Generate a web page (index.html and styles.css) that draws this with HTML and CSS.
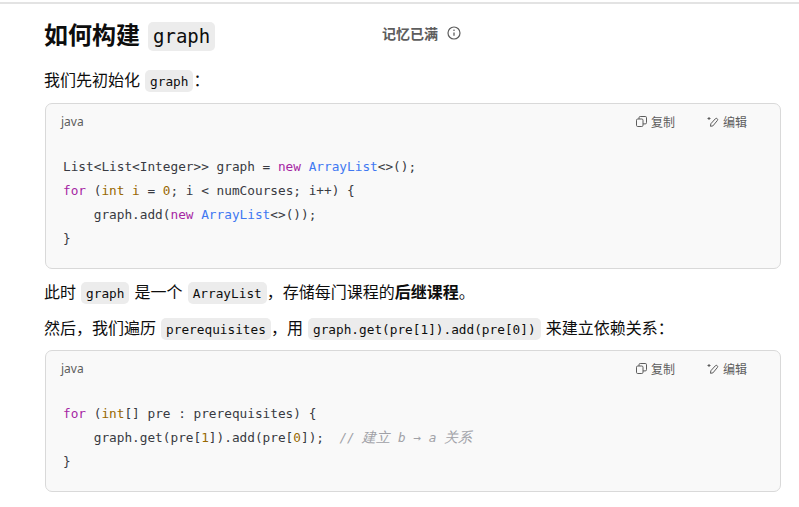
FILE: index.html
```html
<!DOCTYPE html>
<html lang="zh">
<head>
<meta charset="utf-8">
<title>如何构建 graph</title>
<link rel="stylesheet" href="styles.css">
</head>
<body>
<div class="topline"></div>
<main class="content">
  <div class="memory">
    <span>记忆已满</span>
    <svg class="info" width="16" height="16" viewBox="0 0 16 16" fill="none" stroke="currentColor">
      <circle cx="8" cy="8" r="6" stroke-width="1.2"/>
      <path d="M8 7.4v3.4" stroke-width="1.3"/>
      <circle cx="8" cy="5.2" r=".8" fill="currentColor" stroke="none"/>
    </svg>
  </div>
  <h2 class="title"><span class="title-text">如何构建</span><code class="pill pill-lg">graph</code></h2>
  <p class="para">我们先初始化 <code class="pill">graph</code>：</p>
  <section class="block">
    <header class="block-head">
      <span class="lang">java</span>
      <div class="actions">
        <span class="action">
          <svg width="11" height="11" viewBox="0 0 11 11" fill="none" stroke="currentColor" stroke-width="1"><rect x=".5" y="3" width="6.5" height="7.5" rx="1.2"/><path d="M3 3V1.700A1.200 1.200 0 0 1 4.200.5h5a1.200 1.200 0 0 1 1.300 1.200v5a1.200 1.200 0 0 1-1.300 1.200H7"/></svg>
          复制
        </span>
        <span class="action">
          <svg width="12" height="11" viewBox="0 0 12 11" fill="none" stroke="currentColor" stroke-width="1"><path d="M3.500 10.300l.3-2.500 4.500-5a1.300 1.300 0 0 1 2 1.800L5.900 9.900z"/><path d="M.5 2.500h3M2 1v3" stroke-width="1"/></svg>
          编辑
        </span>
      </div>
    </header>
<pre class="code"><code>List&lt;List&lt;Integer&gt;&gt; graph = <span class="kw">new</span> <span class="ty">ArrayList</span>&lt;&gt;();
<span class="kw">for</span> (<span class="nu">int</span> <span class="nu">i</span> = <span class="nu">0</span>; i &lt; numCourses; i++) {
    graph.add(<span class="kw">new</span> <span class="ty">ArrayList</span>&lt;&gt;());
}</code></pre>
  </section>
  <p class="para after-block">此时 <code class="pill">graph</code> 是一个 <code class="pill">ArrayList</code>，存储每门课程的<strong>后继课程</strong>。</p>
  <p class="para">然后，我们遍历 <code class="pill">prerequisites</code>，用 <code class="pill">graph.get(pre[1]).add(pre[0])</code> 来建立依赖关系：</p>
  <section class="block">
    <header class="block-head">
      <span class="lang">java</span>
      <div class="actions">
        <span class="action">
          <svg width="11" height="11" viewBox="0 0 11 11" fill="none" stroke="currentColor" stroke-width="1"><rect x=".5" y="3" width="6.5" height="7.5" rx="1.2"/><path d="M3 3V1.700A1.200 1.200 0 0 1 4.200.5h5a1.200 1.200 0 0 1 1.300 1.200v5a1.200 1.200 0 0 1-1.300 1.200H7"/></svg>
          复制
        </span>
        <span class="action">
          <svg width="12" height="11" viewBox="0 0 12 11" fill="none" stroke="currentColor" stroke-width="1"><path d="M3.500 10.300l.3-2.500 4.500-5a1.300 1.300 0 0 1 2 1.800L5.900 9.900z"/><path d="M.5 2.500h3M2 1v3" stroke-width="1"/></svg>
          编辑
        </span>
      </div>
    </header>
<pre class="code"><code><span class="kw">for</span> (<span class="nu">int</span>[] pre : prerequisites) {
    graph.get(pre[<span class="nu">1</span>]).add(pre[<span class="nu">0</span>]);  <span class="cm">// <span class="cjk">建立</span> b → a <span class="cjk">关系</span></span>
}</code></pre>
  </section>
</main>
</body>
</html>
```
FILE: styles.css
```css
* { box-sizing: border-box; }
html, body { margin: 0; padding: 0; background: #fff; }
body {
  width: 799px;
  height: 507px;
  overflow: hidden;
  color: #0d0d0d;
  font-family: "Noto Sans CJK SC", "Noto Sans", sans-serif;
  font-size: 16px;
}
.topline { height: 4px; border-top: 2px solid #fff; background: #e3e3e3; }
.content { position: relative; padding: 18px 18px 0 45px; }
.title {
  margin: 0 0 0 -1px;
  height: 29px;
  font-size: 24px;
  line-height: 29px;
  font-weight: 700;
  display: flex;
  align-items: center;
  gap: 8px;
}
.title-text { margin-bottom: 6px; }
.para {
  margin: 15px 0 9px -1px;
  height: 28px;
  line-height: 26px;
  white-space: nowrap;
  word-spacing: 1.5px;
}
.para.after-block { margin-top: 9px; margin-bottom: 8px; }
.para + .para { margin-top: 0; margin-bottom: 8px; }
.para strong { font-weight: 700; }
.pill {
  font-family: "DejaVu Sans Mono", monospace;
  font-size: 12.75px;
  background: #ececec;
  border-radius: 5px;
  padding: 3.5px 5px;
  vertical-align: 1px;
  color: #0d0d0d;
}
.pill-lg {
  font-size: 19px;
  font-weight: 400;
  padding: 0 5px;
  height: 29px;
  line-height: 29px;
  vertical-align: baseline;
}
.block {
  background: #f9f9f9;
  border: 1px solid #d9d9d9;
  border-radius: 7px;
}
.block-head {
  height: 36px;
  padding: 0 33px 2px 15px;
  display: flex;
  align-items: center;
  justify-content: space-between;
}
.lang {
  font-family: "Noto Sans", sans-serif;
  font-size: 12px;
  color: #5d5d5d;
}
.actions { display: flex; gap: 32px; }
.action {
  display: flex;
  align-items: center;
  gap: 4px;
  font-size: 12px;
  color: #5d5d5d;
}
.code {
  margin: 0;
  padding: 15px 17px 17px;
  font-family: "DejaVu Sans Mono", monospace;
  font-size: 12.75px;
  line-height: 24px;
  color: #383a42;
  white-space: pre;
}
.code code { font: inherit; }
.kw { color: #a626a4; }
.ty { color: #4078f2; }
.nu { color: #986801; }
.cm { color: #a0a1a7; font-style: italic; }
.cjk { font-size: 14px; line-height: 1; }
.memory {
  position: absolute;
  left: 382px;
  top: 19px;
  display: flex;
  align-items: center;
  gap: 8px;
  height: 20px;
  font-size: 14px;
  font-weight: 700;
  color: #5d5d5d;
}
.info { display: block; color: #5d5d5d; }
```
